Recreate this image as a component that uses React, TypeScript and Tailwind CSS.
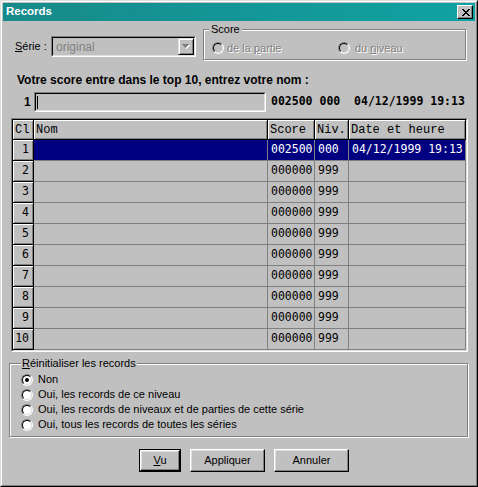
import React from 'react';

const ui = "font-['Liberation_Sans',Arial,sans-serif]";
const mono = "font-['DejaVu_Sans_Mono',monospace]";
const courier = "font-['Liberation_Mono','Courier_New',monospace]";

const ROWS = [1, 2, 3, 4, 5, 6, 7, 8, 9, 10];

function Radio({ checked = false, disabled = false }: { checked?: boolean; disabled?: boolean }) {
  return (
    <span className="relative inline-block w-[12px] h-[12px] shrink-0">
      <span className="absolute inset-0 rounded-full border border-t-[#808080] border-l-[#808080] border-b-white border-r-white" />
      <span
        className={`absolute inset-[1px] rounded-full border border-t-black border-l-black border-b-[#dfdfdf] border-r-[#dfdfdf] ${
          disabled ? 'bg-[#c0c0c0]' : 'bg-white'
        }`}
      />
      {checked && <span className="absolute left-[4px] top-[4px] w-[4px] h-[4px] rounded-full bg-black" />}
    </span>
  );
}

function CloseGlyph() {
  const px = [
    [0, 0], [1, 0], [6, 0], [7, 0],
    [1, 1], [2, 1], [5, 1], [6, 1],
    [2, 2], [3, 2], [4, 2], [5, 2],
    [3, 3], [4, 3],
    [2, 4], [3, 4], [4, 4], [5, 4],
    [1, 5], [2, 5], [5, 5], [6, 5],
    [0, 6], [1, 6], [6, 6], [7, 6],
  ];
  return (
    <svg width="8" height="7" viewBox="0 0 8 7" shapeRendering="crispEdges">
      {px.map(([x, y]) => (
        <rect key={`${x}-${y}`} x={x} y={y} width="1" height="1" fill="#000" />
      ))}
    </svg>
  );
}

function Button({ children, isDefault = false, width }: { children: React.ReactNode; isDefault?: boolean; width: string }) {
  return (
    <div className={`${width} h-[23px] ${isDefault ? 'border border-black' : ''}`}>
      <div className="h-full border border-t-white border-l-white border-b-black border-r-black shadow-[inset_-1px_-1px_0_#808080,inset_1px_1px_0_#dfdfdf] flex items-center justify-center text-[11px] text-black">
        {children}
      </div>
    </div>
  );
}

export default function App() {
  return (
    <div className={`${ui} w-[478px] h-[487px] bg-[#c0c0c0] border border-t-[#dfdfdf] border-l-[#dfdfdf] border-r-black border-b-black text-black`}>
      <div className="h-full border border-t-white border-l-white border-r-[#808080] border-b-[#808080] p-[1px] flex flex-col">
        {/* Title bar */}
        <div className="h-[18px] shrink-0 bg-gradient-to-r from-[#178a8a] to-[#10a2a2] flex items-center justify-between">
          <span className="pl-[3px] text-white font-bold text-[11.5px] leading-none">Records</span>
          <div className="mr-[2px] w-[16px] h-[14px] bg-[#c0c0c0] border border-t-white border-l-white border-b-black border-r-black shadow-[inset_-1px_-1px_0_#808080] flex items-center justify-center pl-[1px]">
            <CloseGlyph />
          </div>
        </div>

        {/* Serie + Score */}
        <div className="flex items-start pt-[8px]">
          <div className="flex items-center mt-[7px] ml-[12px] h-[21px]">
            <span className="w-[36px] text-[11px]">
              <span className="underline">S</span>érie :
            </span>
            <div className="w-[145px] h-[21px] border border-t-[#808080] border-l-[#808080] border-b-white border-r-white">
              <div className="h-full border border-t-black border-l-black border-b-[#dfdfdf] border-r-[#dfdfdf] flex items-center">
                <span className="pl-[3px] flex-1 text-[12px] text-[#808080]">original</span>
                <div className="w-[16px] h-[17px] border border-t-[#dfdfdf] border-l-[#dfdfdf] border-b-black border-r-black shadow-[inset_1px_1px_0_#fff,inset_-1px_-1px_0_#808080] flex items-center justify-center">
                  <svg width="8" height="5" viewBox="0 0 8 5" shapeRendering="crispEdges">
                    <path d="M1 1h7v1H7v1H6v1H5v1H4V4H3V3H2V2H1z" fill="#fff" />
                    <path d="M0 0h7v1H6v1H5v1H4v1H3V3H2V2H1V1H0z" fill="#808080" />
                  </svg>
                </div>
              </div>
            </div>
          </div>

          <div className="relative ml-[7px] w-[263px] h-[31px] border border-[#808080] shadow-[inset_1px_1px_0_#fff,1px_1px_0_#fff]">
            <span className="absolute -top-[8px] left-[5px] px-[2px] bg-[#c0c0c0] text-[11px] leading-[14px]">Score</span>
            <div className="flex items-center pt-[12px] pl-[8px] text-[11px] leading-[12px] text-[#808080] [text-shadow:1px_1px_0_#fff]">
              <div className="w-[126px] flex items-center gap-[3px]">
                <Radio disabled />
                <span>
                  de la <span className="underline">p</span>artie
                </span>
              </div>
              <div className="flex items-center gap-[5px]">
                <Radio disabled />
                <span>
                  du <span className="underline">n</span>iveau
                </span>
              </div>
            </div>
          </div>
        </div>

        {/* Prompt */}
        <div className="mt-[13px] pl-[14px] font-bold text-[12px] leading-[14px]">
          Votre score entre dans le top 10, entrez votre nom :
        </div>

        {/* Name entry */}
        <div className="mt-[5px] flex items-center h-[20px]">
          <span className="ml-[21px] w-[10px] font-bold text-[12px]">1</span>
          <div className="w-[232px] h-[20px] border border-t-[#808080] border-l-[#808080] border-b-white border-r-white">
            <div className="h-full border border-t-black border-l-black border-b-[#dfdfdf] border-r-[#dfdfdf] flex items-center pl-[1px]">
              <span className="w-[1px] h-[13px] bg-black" />
            </div>
          </div>
          <span className={`${mono} ml-[5px] font-bold text-[11.5px] whitespace-pre`}>002500 000  04/12/1999 19:13</span>
        </div>

        {/* Grid */}
        <div className="mt-[6px] ml-[8px] w-[457px] h-[234px] border border-t-[#808080] border-l-[#808080] border-b-white border-r-white">
          <div className="h-full border border-t-black border-l-black border-b-[#dfdfdf] border-r-[#dfdfdf] flex flex-col">
            <div className={`${courier} flex h-[20px] text-[12px]`}>
              {[
                ['Cl', 'w-[21px]'],
                ['Nom', 'w-[234px]'],
                ['Score', 'w-[47px]'],
                ['Niv.', 'w-[34px]'],
                ['Date et heure', 'flex-1'],
              ].map(([label, w]) => (
                <div
                  key={label}
                  className={`${w} h-full border-r border-b border-black shadow-[inset_1px_1px_0_#fff,inset_-1px_-1px_0_#808080] flex items-center pl-[2px]`}
                >
                  {label}
                </div>
              ))}
            </div>
            {ROWS.map((n) => {
              const sel = n === 1;
              const cell = `h-full border-r border-b border-[#808080] flex items-center pl-[3px] ${sel ? 'bg-[#000080] text-white' : ''}`;
              return (
                <div key={n} className={`${mono} flex h-[21px] text-[11.5px]`}>
                  <div className="w-[21px] h-full border-r border-b border-black shadow-[inset_1px_1px_0_#fff,inset_-1px_-1px_0_#808080] flex items-center justify-end pr-[4px]">
                    {n}
                  </div>
                  <div className={`w-[234px] ${cell}`} />
                  <div className={`w-[47px] ${cell}`}>{sel ? '002500' : '000000'}</div>
                  <div className={`w-[34px] ${cell}`}>{sel ? '000' : '999'}</div>
                  <div className={`flex-1 ${cell}`}>{sel ? '04/12/1999 19:13' : ''}</div>
                </div>
              );
            })}
          </div>
        </div>

        {/* Reset group */}
        <div className="relative mt-[11px] ml-[6px] w-[459px] h-[74px] border border-[#808080] shadow-[inset_1px_1px_0_#fff,1px_1px_0_#fff]">
          <span className="absolute -top-[8px] left-[11px] px-[1px] bg-[#c0c0c0] text-[11px] leading-[14px]">
            <span className="underline">R</span>éinitialiser les records
          </span>
          <div className="pt-[8px] pl-[11px] flex flex-col text-[11px]">
            {[
              'Non',
              'Oui, les records de ce niveau',
              'Oui, les records de niveaux et de parties de cette série',
              'Oui, tous les records de toutes les séries',
            ].map((t, i) => (
              <div key={t} className="h-[15px] flex items-center gap-[5px]">
                <Radio checked={i === 0} />
                <span>{t}</span>
              </div>
            ))}
          </div>
        </div>

        {/* Buttons */}
        <div className="mt-[12px] ml-[136px] flex gap-[9px]">
          <Button isDefault width="w-[42px]">
            <span>
              <span className="underline">V</span>u
            </span>
          </Button>
          <Button width="w-[75px]">Appliquer</Button>
          <Button width="w-[75px]">Annuler</Button>
        </div>
      </div>
    </div>
  );
}
